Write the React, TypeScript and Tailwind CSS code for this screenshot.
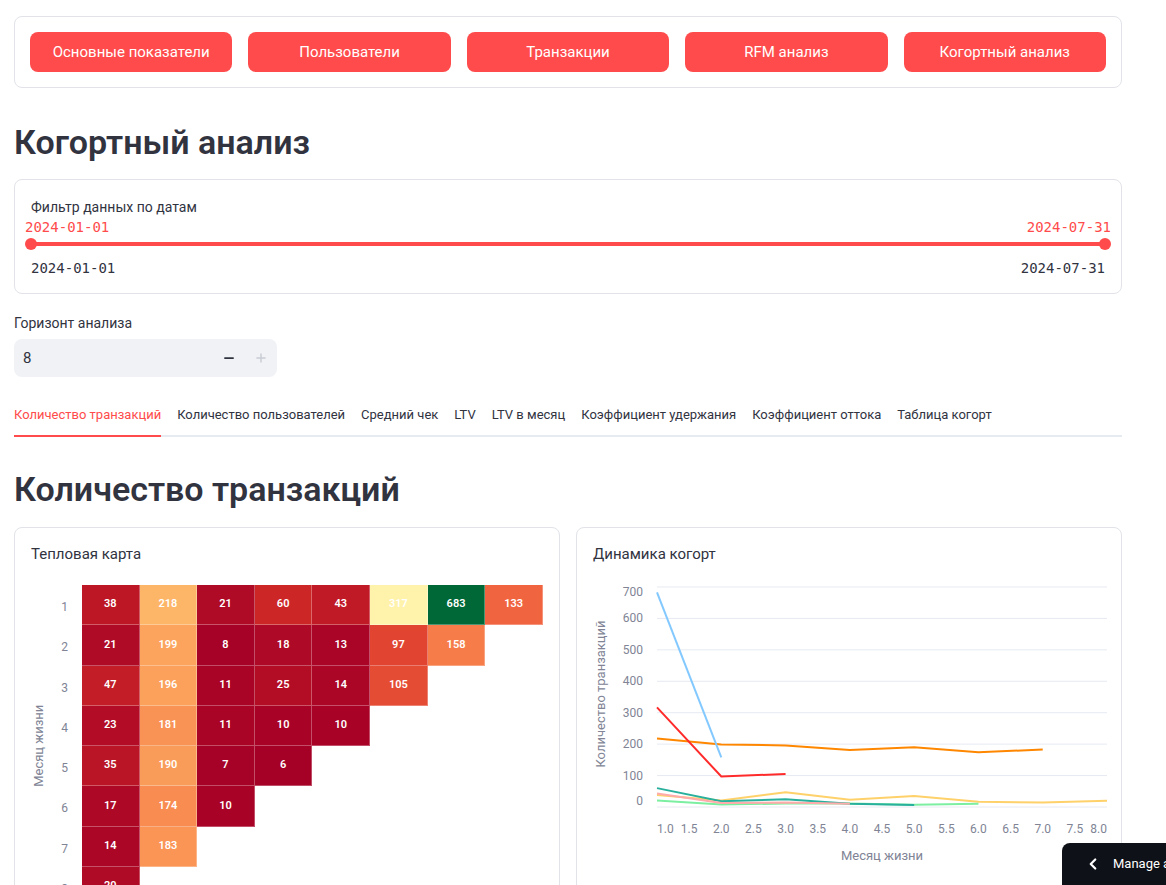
import { ChevronLeft, Minus, Plus } from 'lucide-react';

const navItems = ['Основные показатели', 'Пользователи', 'Транзакции', 'RFM анализ', 'Когортный анализ'];

const tabs = [
  'Количество транзакций',
  'Количество пользователей',
  'Средний чек',
  'LTV',
  'LTV в месяц',
  'Коэффициент удержания',
  'Коэффициент оттока',
  'Таблица когорт',
];

// cohorts as columns, lifetime months as rows
const cohorts: number[][] = [
  [38, 21, 47, 23, 35, 17, 14, 20],
  [218, 199, 196, 181, 190, 174, 183],
  [21, 8, 11, 11, 7, 10],
  [60, 18, 25, 10, 6],
  [43, 13, 14, 10],
  [317, 97, 105],
  [683, 158],
  [133],
];

const lineColors = ['#ffd16a', '#ff8700', '#7defa1', '#29b09d', '#ffabab', '#ff2b2b', '#83c9ff', '#0068c9'];

const rdylgn: [number, number, number][] = [
  [165, 0, 38],
  [215, 48, 39],
  [244, 109, 67],
  [253, 174, 97],
  [254, 224, 139],
  [255, 255, 191],
  [217, 239, 139],
  [166, 217, 106],
  [102, 189, 99],
  [26, 152, 80],
  [0, 104, 55],
];

function heatColor(v: number) {
  const t = Math.max(0, Math.min(1, (v - 6) / (683 - 6))) * 10;
  const i = Math.min(9, Math.floor(t));
  const f = t - i;
  const a = rdylgn[i];
  const b = rdylgn[i + 1];
  const c = a.map((x, k) => Math.round(x + (b[k] - x) * f));
  return `rgb(${c[0]}, ${c[1]}, ${c[2]})`;
}

function Heatmap() {
  const rows = 8;
  return (
    <div className="flex mt-[21px]">
      <div className="w-[16px] flex items-center justify-center">
        <span className="-rotate-90 whitespace-nowrap text-[13px] text-[#808495]">Месяц жизни</span>
      </div>
      <div className="w-[35px] flex flex-col">
        {Array.from({ length: rows }).map((_, r) => (
          <div key={r} className="h-[40.25px] flex items-center justify-end pr-[14px] pt-[4px] text-[12px] text-[#808495]">
            {r + 1}
          </div>
        ))}
      </div>
      <div className="grid grid-cols-8 w-[462px]">
        {Array.from({ length: rows }).map((_, r) =>
          cohorts.map((col, c) => {
            const v = col[r];
            if (v === undefined) return <div key={`${r}-${c}`} className="h-[40.25px]" />;
            return (
              <div
                key={`${r}-${c}`}
                className="h-[40.25px] flex items-center justify-center text-[11px] font-semibold text-white border-r border-b border-white/30"
                style={{ backgroundColor: heatColor(v) }}
              >
                {v}
              </div>
            );
          })
        )}
      </div>
    </div>
  );
}

function LineChart() {
  const x = (m: number) => 64 + (m - 1) * 64.29;
  const y = (v: number) => 233 - v * 0.3143;
  const yTicks = [0, 100, 200, 300, 400, 500, 600, 700];
  const xTicks = Array.from({ length: 15 }, (_, i) => 1 + i * 0.5);
  return (
    <svg width="516" height="300" className="mt-[10px] overflow-visible">
      {yTicks.map(t => (
        <g key={t}>
          <line x1={64} x2={514} y1={y(t)} y2={y(t)} stroke="#e6eaf1" strokeWidth={1} />
          <text
            x={50}
            y={t === 700 ? y(t) + 9 : t === 0 ? y(t) - 2 : y(t) + 4}
            textAnchor="end"
            fontSize="12"
            fill="#808495"
          >
            {t}
          </text>
        </g>
      ))}
      {xTicks.map((t, i) => (
        <text
          key={t}
          x={x(t)}
          y={259}
          textAnchor={i === 0 ? 'start' : i === xTicks.length - 1 ? 'end' : 'middle'}
          fontSize="12"
          fill="#808495"
        >
          {t.toFixed(1)}
        </text>
      ))}
      {cohorts.map((col, c) =>
        col.length > 1 ? (
          <polyline
            key={c}
            points={col.map((v, i) => `${x(i + 1)},${y(v)}`).join(' ')}
            fill="none"
            stroke={lineColors[c]}
            strokeWidth={2}
          />
        ) : null
      )}
      <text x={289} y={286} textAnchor="middle" fontSize="13" fill="#808495">
        Месяц жизни
      </text>
      <text
        x={12}
        y={120}
        textAnchor="middle"
        fontSize="13"
        fill="#808495"
        transform="rotate(-90 12 120)"
      >
        Количество транзакций
      </text>
    </svg>
  );
}

export default function App() {
  return (
    <div className="min-h-screen bg-white text-[#31333f]" style={{ fontFamily: 'Roboto, "Noto Sans", sans-serif' }}>
      <div className="w-[1108px] ml-[14px] pt-4 pb-10">
        <div className="border border-[#e1e3e8] rounded-lg p-[15px] grid grid-cols-5 gap-4">
          {navItems.map(item => (
            <button key={item} className="h-10 rounded-lg bg-[#ff4b4b] text-white text-[15px]">
              {item}
            </button>
          ))}
        </div>

        <h1 className="mt-[33px] text-[34px] leading-[43px] font-semibold">Когортный анализ</h1>

        <div className="mt-[15px] border border-[#e1e3e8] rounded-lg px-4 pt-[17px] pb-[15px]">
          <div className="text-[14px] leading-5">Фильтр данных по датам</div>
          <div
            className="flex justify-between text-[14px] leading-5 text-[#ff4b4b] -mx-[6px]"
            style={{ fontFamily: '"DejaVu Sans Mono", "Liberation Mono", monospace' }}
          >
            <span>2024-01-01</span>
            <span>2024-07-31</span>
          </div>
          <div className="relative mt-px h-3 flex items-center">
            <div className="h-1 w-full bg-[#ff4b4b] rounded-full" />
            <div className="absolute left-[-6px] w-3 h-3 rounded-full bg-[#ff4b4b]" />
            <div className="absolute right-[-6px] w-3 h-3 rounded-full bg-[#ff4b4b]" />
          </div>
          <div
            className="mt-2 flex justify-between text-[14px] leading-5 text-[#31333f]"
            style={{ fontFamily: '"DejaVu Sans Mono", "Liberation Mono", monospace' }}
          >
            <span>2024-01-01</span>
            <span>2024-07-31</span>
          </div>
        </div>

        <div className="mt-[19px] text-[14px] leading-5">Горизонт анализа</div>
        <div className="mt-[6px] w-[263px] h-[38px] bg-[#f0f2f6] rounded-lg flex items-center">
          <span className="flex-1 pl-[9px] text-[15px]">8</span>
          <span className="w-8 flex justify-center text-[#31333f]">
            <Minus size={14} strokeWidth={3} />
          </span>
          <span className="w-8 flex justify-center text-[#c9ccd3]">
            <Plus size={14} strokeWidth={2.5} />
          </span>
        </div>

        <div className="mt-[28px] flex gap-4 border-b-2 border-[#e6eaf1]">
          {tabs.map((t, i) => (
            <div
              key={t}
              className={`-mb-[2px] pb-[10px] text-[13px] leading-5 border-b-2 ${
                i === 0 ? 'border-[#ff4b4b] text-[#ff4b4b]' : 'border-transparent'
              }`}
            >
              {t}
            </div>
          ))}
        </div>

        <h2 className="mt-[31px] text-[34px] leading-[43px] font-semibold">Количество транзакций</h2>

        <div className="mt-4 grid grid-cols-2 gap-4">
          <div className="border border-[#e1e3e8] rounded-lg p-4 h-[470px]">
            <div className="text-[15px] leading-5">Тепловая карта</div>
            <Heatmap />
          </div>
          <div className="border border-[#e1e3e8] rounded-lg p-4 h-[470px]">
            <div className="text-[15px] leading-5">Динамика когорт</div>
            <LineChart />
          </div>
        </div>
      </div>

      <div className="fixed bottom-0 left-[1062px] w-[170px] h-[42px] bg-[#0e1117] rounded-tl-lg flex items-center pl-[22px] gap-[11px] text-white">
        <ChevronLeft size={18} strokeWidth={3} />
        <span className="text-[13px]">Manage app</span>
      </div>
    </div>
  );
}
